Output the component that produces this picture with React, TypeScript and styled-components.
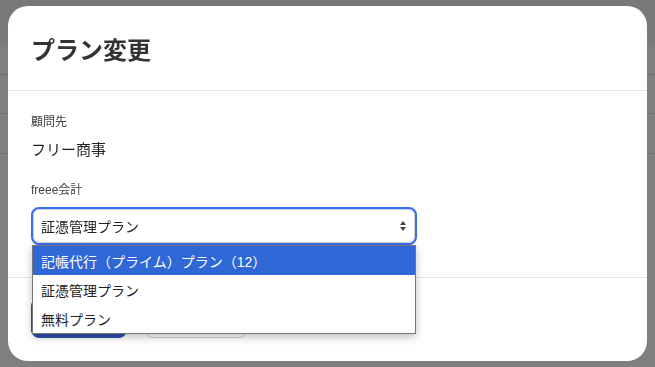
import * as React from "react";
import styled, { createGlobalStyle } from "styled-components";

const GlobalStyle = createGlobalStyle`
  html, body {
    margin: 0;
    padding: 0;
    width: 655px;
    height: 367px;
    overflow: hidden;
    background: #ffffff;
    font-family: "Liberation Sans", "Noto Sans CJK JP", sans-serif;
  }
`;

const Page = styled.div`
  width: 655px;
  height: 367px;
  background: #ffffff;
`;

const PageTop = styled.div`
  height: 44px;
  background: #f3f3f3;
`;

const PageRow = styled.div<{ $h: number }>`
  height: ${(p) => p.$h}px;
  border-bottom: 1px solid #dedede;
`;

const Overlay = styled.div`
  position: fixed;
  inset: 0;
  background: rgba(0, 0, 0, 0.5);
  padding: 6px 8px;
  box-sizing: border-box;
`;

const Modal = styled.div`
  width: 639px;
  height: 355px;
  background: #ffffff;
  border-radius: 20px;
  display: flex;
  flex-direction: column;
  overflow: hidden;
`;

const Header = styled.header`
  height: 84px;
  flex-shrink: 0;
  display: flex;
  align-items: center;
  padding: 0 23px;
  border-bottom: 1px solid #e4e4e4;
`;

const Title = styled.h1`
  margin: 0;
  font-size: 24px;
  font-weight: 700;
  color: #333333;
`;

const Body = styled.div`
  padding: 22px 23px 32px;
  border-bottom: 1px solid #e4e4e4;
  display: flex;
  flex-direction: column;
`;

const Label = styled.div<{ $gap?: number }>`
  font-size: 12px;
  line-height: 18px;
  color: #444444;
  margin-top: ${(p) => p.$gap ?? 0}px;
`;

const Value = styled.div`
  font-size: 15px;
  line-height: 22px;
  color: #1f1f1f;
  margin-top: 8px;
`;

const SelectWrap = styled.div`
  position: relative;
  width: 386px;
  margin-top: 8px;
`;

const SelectBox = styled.div`
  height: 38px;
  box-sizing: border-box;
  border: 2px solid #3b6cf2;
  border-radius: 8px;
  box-shadow: inset 0 0 0 1px #d6d6d6, 0 1px 2px rgba(0, 0, 0, 0.08);
  display: flex;
  align-items: center;
  justify-content: space-between;
  padding: 0 9px 0 8px;
  font-size: 14px;
  color: #222222;
  background: #ffffff;
`;

const Options = styled.ul`
  position: absolute;
  top: 100%;
  left: 1px;
  right: 1px;
  margin: 0;
  padding: 0;
  list-style: none;
  background: #ffffff;
  border: 1px solid #777777;
  box-shadow: 0 3px 8px rgba(0, 0, 0, 0.25);
  z-index: 2;
`;

const Option = styled.li<{ $active?: boolean }>`
  height: 29px;
  display: flex;
  align-items: center;
  padding-left: 8px;
  font-size: 14px;
  color: ${(p) => (p.$active ? "#ffffff" : "#222222")};
  background: ${(p) => (p.$active ? "#2f68d6" : "#ffffff")};
`;

const Footer = styled.footer`
  padding: 20px 23px 0;
  display: flex;
  gap: 18px;
`;

const Button = styled.button<{ $primary?: boolean }>`
  height: 40px;
  padding: 0 12px 8px;
  border-radius: 8px;
  font-family: inherit;
  font-size: 13px;
  line-height: 16px;
  font-weight: 700;
  border: 1px solid ${(p) => (p.$primary ? "#2c4fae" : "#cfcfcf")};
  background: ${(p) => (p.$primary ? "#2c4fae" : "#ffffff")};
  color: ${(p) => (p.$primary ? "#ffffff" : "#333333")};
  width: ${(p) => (p.$primary ? 96 : 102)}px;
`;

function Arrows() {
  return (
    <svg width="6" height="10" viewBox="0 0 6 10">
      <path d="M3 0 L6 4 L0 4 Z" fill="#444" />
      <path d="M0 6 L6 6 L3 10 Z" fill="#444" />
    </svg>
  );
}

const options = ["記帳代行（プライム）プラン（12）", "証憑管理プラン", "無料プラン"];

export default function App() {
  return (
    <>
      <GlobalStyle />
      <Page>
        <PageTop />
        <PageRow $h={30} />
        <PageRow $h={38} />
        <PageRow $h={39} />
      </Page>
      <Overlay>
        <Modal>
          <Header>
            <Title>プラン変更</Title>
          </Header>
          <Body>
            <Label>顧問先</Label>
            <Value>フリー商事</Value>
            <Label $gap={20}>freee会計</Label>
            <SelectWrap>
              <SelectBox>
                <span>証憑管理プラン</span>
                <Arrows />
              </SelectBox>
              <Options>
                {options.map((o, i) => (
                  <Option key={o} $active={i === 0}>
                    {o}
                  </Option>
                ))}
              </Options>
            </SelectWrap>
          </Body>
          <Footer>
            <Button $primary>変更する</Button>
            <Button>キャンセル</Button>
          </Footer>
        </Modal>
      </Overlay>
    </>
  );
}
